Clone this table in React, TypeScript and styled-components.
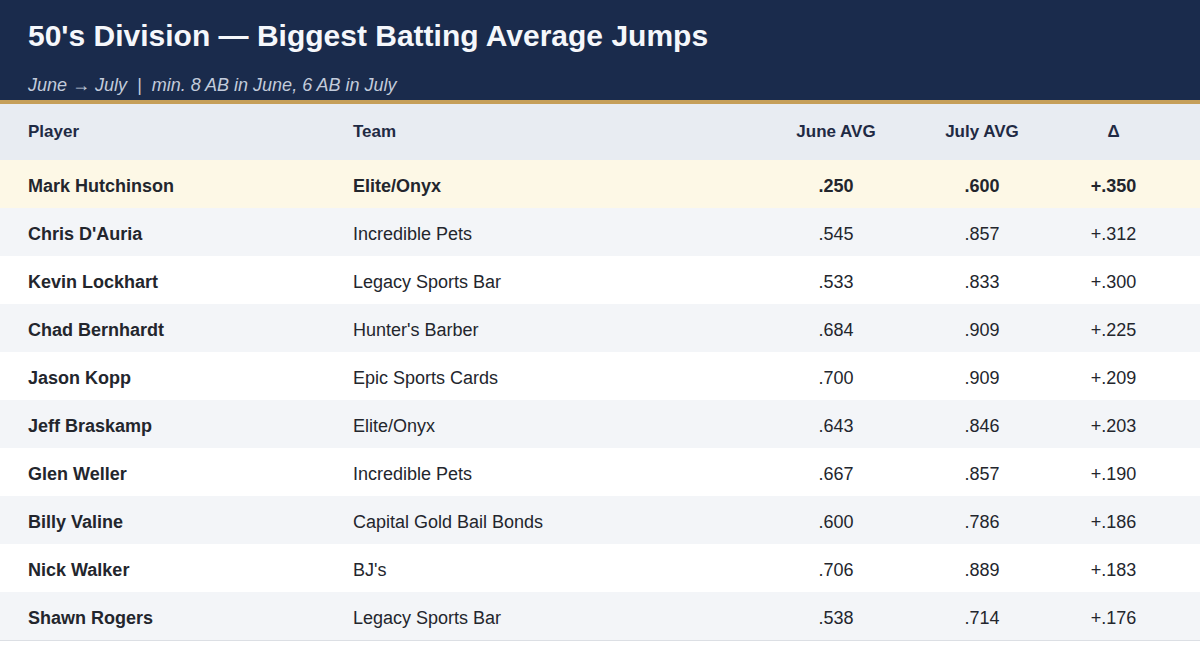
import { createGlobalStyle, styled } from "styled-components";

type Row = {
  player: string;
  team: string;
  june: string;
  july: string;
  delta: string;
};

const rows: Row[] = [
  { player: "Mark Hutchinson", team: "Elite/Onyx", june: ".250", july: ".600", delta: "+.350" },
  { player: "Chris D'Auria", team: "Incredible Pets", june: ".545", july: ".857", delta: "+.312" },
  { player: "Kevin Lockhart", team: "Legacy Sports Bar", june: ".533", july: ".833", delta: "+.300" },
  { player: "Chad Bernhardt", team: "Hunter's Barber", june: ".684", july: ".909", delta: "+.225" },
  { player: "Jason Kopp", team: "Epic Sports Cards", june: ".700", july: ".909", delta: "+.209" },
  { player: "Jeff Braskamp", team: "Elite/Onyx", june: ".643", july: ".846", delta: "+.203" },
  { player: "Glen Weller", team: "Incredible Pets", june: ".667", july: ".857", delta: "+.190" },
  { player: "Billy Valine", team: "Capital Gold Bail Bonds", june: ".600", july: ".786", delta: "+.186" },
  { player: "Nick Walker", team: "BJ's", june: ".706", july: ".889", delta: "+.183" },
  { player: "Shawn Rogers", team: "Legacy Sports Bar", june: ".538", july: ".714", delta: "+.176" },
];

const App = () => {
  return (
    <>
      <GlobalStyle />
      <Page>
        <Header>
          <Title>50's Division — Biggest Batting Average Jumps</Title>
          <Subtitle>June → July  |  min. 8 AB in June, 6 AB in July</Subtitle>
        </Header>
        <Table>
          <HeadRow>
            <HeadCell>Player</HeadCell>
            <HeadCell>Team</HeadCell>
            <HeadCell $center>June AVG</HeadCell>
            <HeadCell $center>July AVG</HeadCell>
            <HeadCell $center>Δ</HeadCell>
          </HeadRow>
          {rows.map((r, i) => (
            <BodyRow key={r.player} $top={i === 0} $alt={i % 2 === 1}>
              <NameCell>{r.player}</NameCell>
              <Cell>{r.team}</Cell>
              <Cell $center>{r.june}</Cell>
              <Cell $center>{r.july}</Cell>
              <Cell $center>{r.delta}</Cell>
            </BodyRow>
          ))}
        </Table>
      </Page>
    </>
  );
};

export default App;

const GlobalStyle = createGlobalStyle`
    html, body {
        margin: 0;
        padding: 0;
        background: #ffffff;
    }

    body {
        font-family: "Liberation Sans", Arial, sans-serif;
        color: #222831;
    }
`;

const Page = styled.div`
    width: 1200px;
    min-height: 668px;
    background: #ffffff;
`;

const Header = styled.header`
    background: #1a2b4c;
    border-bottom: 4px solid #c59f5a;
    height: 104px;
    padding: 17px 28px 0;
    box-sizing: border-box;
    display: flex;
    flex-direction: column;
`;

const Title = styled.h1`
    margin: 0;
    font-size: 30px;
    line-height: 38px;
    font-weight: 700;
    color: #f5f7fb;
`;

const Subtitle = styled.p`
    margin: 19px 0 0;
    font-size: 18px;
    line-height: 22px;
    font-style: italic;
    color: #c3cbdb;
    white-space: pre;
`;

const Table = styled.div`
    display: flex;
    flex-direction: column;
    border-bottom: 1px solid #dcdfe4;
`;

const gridCols = `
    display: grid;
    grid-template-columns: 325px 438px 146px 146px 1fr;
    padding-right: 28px;
    align-items: center;
`;

const HeadRow = styled.div`
    ${gridCols};
    height: 56px;
    background: #e8ecf2;
`;

const BodyRow = styled.div<{ $top?: boolean; $alt?: boolean }>`
    ${gridCols};
    height: 48px;
    background: ${({ $top, $alt }) => ($top ? "#fdf8e6" : $alt ? "#f3f5f8" : "#ffffff")};
    font-weight: ${({ $top }) => ($top ? 700 : 400)};
`;

const HeadCell = styled.div<{ $center?: boolean }>`
    font-size: 17px;
    font-weight: 700;
    color: #1f2a44;
    text-align: ${({ $center }) => ($center ? "center" : "left")};
    padding-left: ${({ $center }) => ($center ? "0" : "28px")};
`;

const Cell = styled.div<{ $center?: boolean }>`
    font-size: 18px;
    color: #23262d;
    padding-top: 4px;
    text-align: ${({ $center }) => ($center ? "center" : "left")};
    padding-left: ${({ $center }) => ($center ? "0" : "28px")};
`;

const NameCell = styled(Cell)`
    font-weight: 700;
`;
